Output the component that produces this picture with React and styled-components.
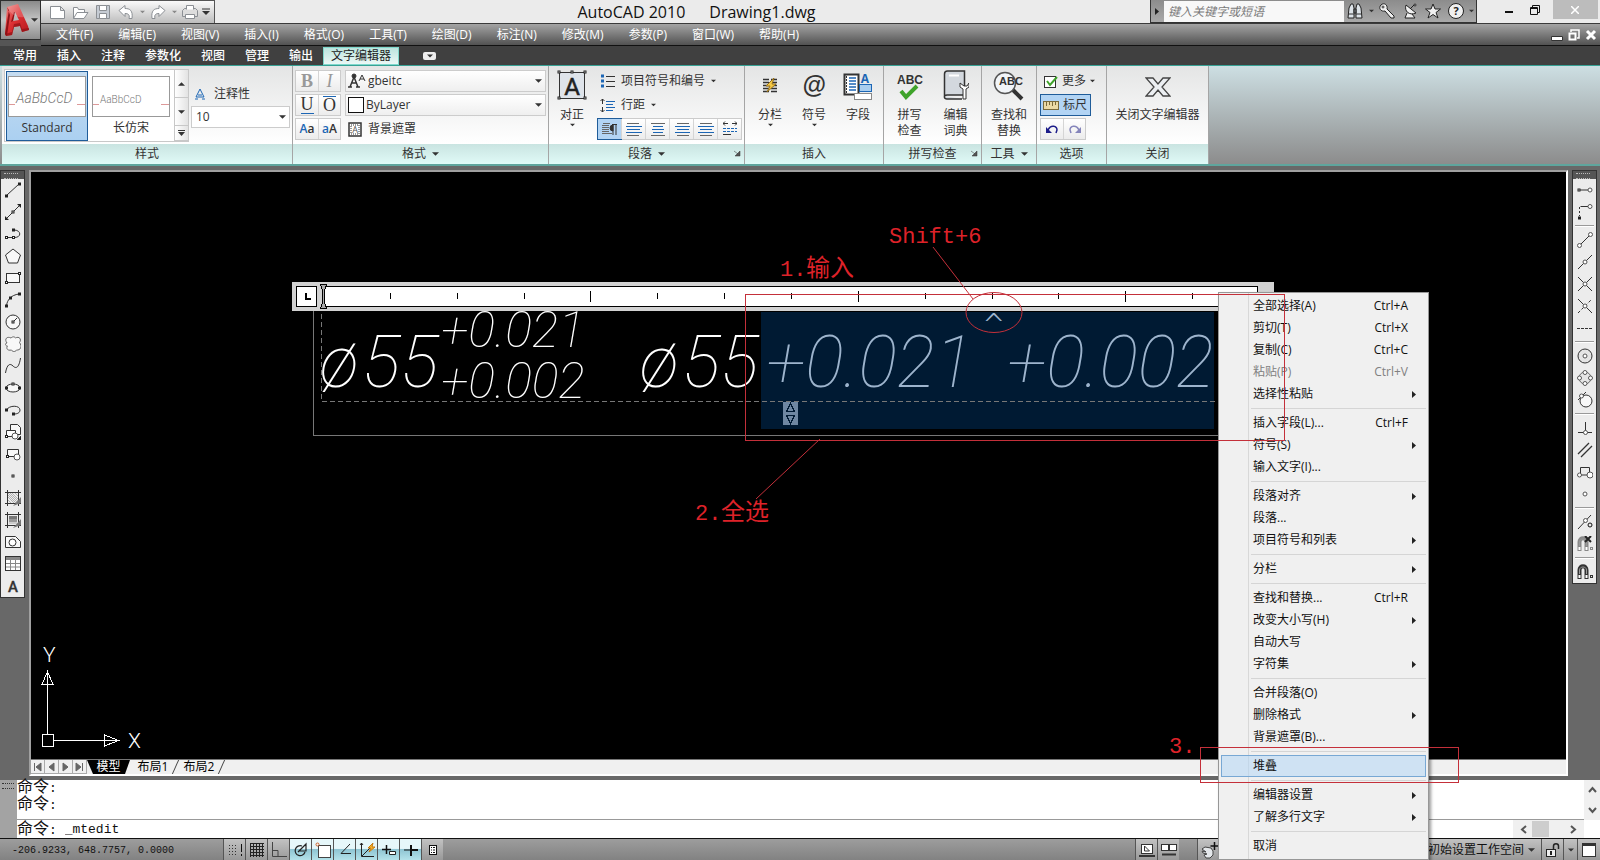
import React from "react";
import styled, { createGlobalStyle, css } from "styled-components";

const GlobalStyle = createGlobalStyle`
  * {
    box-sizing: border-box;
  }
  body {
    margin: 0;
    background-color: #686868;
  }
  button, select, input {
    font: inherit;
    color: inherit;
    margin: 0;
    padding: 0;
    border: none;
    background: none;
    border-radius: 0;
  }
  svg {
    display: block;
    flex-shrink: 0;
  }
`;

const mono = css`
  font-family: "Liberation Mono", "Noto Sans CJK SC", monospace;
`;

const grip = css`
  content: "";
  display: block;
  height: 4px;
  border-top: 1px dotted;
  border-bottom: 1px dotted;
`;

const Page = styled.div`
  position: relative;
  display: flex;
  flex-direction: column;
  min-height: 100vh;
  overflow: hidden;
  background-color: #686868;
  font-family: "Open Sans", "Noto Sans CJK SC", sans-serif;
  font-size: 12px;
  line-height: 16px;
  color: #333;
`;

/* ---------- header ---------- */

const Header = styled.header`
  display: grid;
  grid-template-columns: 41px 1fr;
  grid-template-rows: 24px 22px;
`;

const AppButton = styled.button`
  grid-row: 1 / 3;
  display: flex;
  align-items: center;
  gap: 1px;
  margin-bottom: 6px;
  padding-left: 4px;
  border: 1px solid #2e2e2e;
  background: linear-gradient(#8a8a8a, #c4c4c4 50%, #8e8e8e);
  box-shadow: 0 6px 0 #555;
`;

const TitleBar = styled.div`
  display: flex;
  justify-content: space-between;
  background-color: #ebebeb;
  border-bottom: 1px solid #3a3a3a;
`;

const QuickAccess = styled.div`
  display: flex;
  align-items: center;
  gap: 3px;
  width: 174px;
  padding-left: 6px;
  border: 1px solid #555;
  border-width: 1px 1px 0 0;
  background: linear-gradient(#fafafa, #bdbdbd);
`;

const QuickButton = styled.button`
  display: flex;
  align-items: center;
  justify-content: center;
  width: ${p => (p.$slim ? 6 : 20)}px;
  height: 20px;
`;

const WindowTitle = styled.h1`
  display: flex;
  gap: 24px;
  margin: 0;
  padding-left: 28px;
  font-size: 16px;
  line-height: 24px;
  font-weight: normal;
  color: #111;
`;

const TitleRight = styled.div`
  display: flex;
  align-items: flex-start;
`;

const InfoCenter = styled.div`
  display: flex;
  align-items: center;
  height: 23px;
  border: 1px solid #333;
  border-top: none;
  background: linear-gradient(#8c8c8c, #a9a9a9);
`;

const SearchInput = styled.input`
  width: 180px;
  height: 21px;
  padding-left: 4px;
  background-color: #f8f8f8;
  font-style: italic;
  outline: none;

  &::placeholder {
    color: #7a7a7a;
    opacity: 1;
  }
`;

const InfoButton = styled.button`
  display: flex;
  align-items: center;
  justify-content: center;
  width: ${p => p.$w || 23}px;
  height: 22px;
`;

const WindowButtons = styled.div`
  display: flex;
  gap: 10px;
  padding: 0 2px 0 24px;
`;

const WindowButton = styled.button`
  display: flex;
  align-items: center;
  justify-content: center;
  width: ${p => (p.$close ? 45 : 16)}px;
  height: 19px;
  background-color: ${p => (p.$close ? "#bcbcbc" : "transparent")};
`;

const MenuBar = styled.nav`
  display: flex;
  align-items: center;
  padding: 0 2px 0 3px;
  background: linear-gradient(#a4a4a4, #525252);
  border-bottom: 1px solid #111;
`;

const MenuButton = styled.button`
  padding: 0 13px 0 12px;
  line-height: 20px;
  color: #fff;
  text-align: left;
`;

const DocButtons = styled.div`
  display: flex;
  gap: 2px;
  margin-left: auto;
`;

const DocButton = styled.button`
  display: flex;
  align-items: center;
  justify-content: center;
  width: 15px;
  height: 16px;
`;

/* ---------- ribbon ---------- */

const RibbonTabs = styled.div`
  display: flex;
  align-items: flex-end;
  height: 19px;
  padding-left: 3px;
  background-color: #404040;
`;

const RibbonTab = styled.button`
  height: 18px;
  padding: 0 ${p => (p.$active ? 8 : 10)}px;
  line-height: 16px;
  color: ${p => (p.$active ? "#222" : "#fff")};
  font-weight: ${p => (p.$active ? 400 : 500)};
  background: ${p => (p.$active ? "linear-gradient(#b9e3dd, #eef9f7)" : "none")};
  box-shadow: ${p => (p.$active ? "inset 0 0 0 1px #7fd8cc" : "none")};
`;

const TabToggle = styled.button`
  align-self: center;
  display: flex;
  align-items: center;
  justify-content: center;
  width: 13px;
  height: 8px;
  margin-left: 24px;
  border-radius: 2px;
  background-color: #eee;
`;

const RibbonBar = styled.div`
  display: flex;
  padding-left: 2px;
  border-top: 1px solid #37a295;
  border-bottom: 2px solid #5fa59d;
  background: linear-gradient(#cddfe3, #8c8c8c);
`;

const Panel = styled.section`
  display: flex;
  flex-direction: column;
  flex: 0 0 ${p => p.$w}px;
  border-right: 1px solid #a5a5a5;
  background: linear-gradient(#e4e5e5, #fff 78px);
`;

const PanelBody = styled.div`
  display: flex;
  justify-content: ${p => (p.$center ? "center" : "flex-start")};
  height: 78px;
  padding: ${p => p.$pad || "4px"};
  gap: ${p => p.$gap || 0}px;
`;

const PanelTitle = styled.div`
  position: relative;
  display: flex;
  align-items: center;
  justify-content: center;
  gap: 6px;
  height: 20px;
  background: linear-gradient(#c9e4e1, #e0faf7);
`;

const Launcher = styled.button`
  position: absolute;
  right: 3px;
  top: 6px;
`;

const Column = styled.div`
  display: flex;
  flex-direction: column;
  align-items: flex-start;
  gap: ${p => p.$gap || 0}px;
  padding-top: ${p => p.$top || 0}px;
`;

const Gallery = styled.div`
  display: flex;
  gap: 2px;
  height: 73px;
  padding: 1px 0 0 1px;
  border: 1px solid #c8c8c8;
  background-color: #fff;
`;

const GalleryItem = styled.button`
  display: flex;
  flex-direction: column;
  align-items: center;
  width: 82px;
  height: 70px;
  padding-top: 4px;
  gap: 3px;
  border: 1px solid ${p => (p.$active ? "#1f5c99" : "transparent")};
  background: ${p => (p.$active ? "linear-gradient(#c6dcf0, #abd0f1)" : "none")};
`;

const GalleryScroll = styled.div`
  display: flex;
  flex-direction: column;
  width: 14px;
  margin-top: -1px;
  border-left: 1px solid #c8c8c8;
`;

const ScrollButton = styled.button`
  display: flex;
  align-items: center;
  justify-content: center;
  flex: ${p => p.$grow || 2};
  border-bottom: 1px solid #c8c8c8;
  background: linear-gradient(90deg, #fff, #e3e3e3);
`;

const ToolGroup = styled.div`
  display: flex;
  border: 1px solid #ccc;
  background: linear-gradient(#fff, #ececec);
`;

const ToolButton = styled.button`
  display: flex;
  align-items: center;
  justify-content: center;
  width: ${p => p.$w || 22}px;
  height: 20px;
  color: ${p => p.$color || "#333"};
  background-color: ${p => (p.$active ? "#b2d4f4" : "transparent")};
  box-shadow: ${p => (p.$active ? "0 0 0 1px #1f5c99" : "none")};

  & + & {
    border-left: 1px solid #d5d5d5;
  }
`;

const Glyph = styled.span`
  font-family: "Liberation Serif", serif;
  font-size: 18px;
  line-height: 17px;
  font-weight: ${p => (p.$bold ? 700 : 400)};
  font-style: ${p => (p.$italic ? "italic" : "normal")};
  border-bottom: ${p => (p.$under ? "1px solid #1c66b5" : "none")};
  border-top: ${p => (p.$over ? "1px solid #1c66b5" : "none")};
`;

const CaseGlyph = styled.span`
  font-weight: 600;

  & > i {
    font-style: normal;
    color: #1c66b5;
  }
`;

const Combo = styled.label`
  display: flex;
  align-items: center;
  width: ${p => p.$w}px;
  height: 22px;
  padding: 0 3px 0 2px;
  border: 1px solid #ccc;
  background: ${p => (p.$plain ? "#fff" : "linear-gradient(#fff, #efefef)")};
`;

const ComboSelect = styled.select`
  flex: 1;
  min-width: 0;
  padding-left: 2px;
  appearance: none;
  outline: none;
`;

const Swatch = styled.span`
  width: 16px;
  height: 16px;
  border: 1px solid #111;
  background-color: #fff;
`;

const FlatButton = styled.button`
  display: flex;
  align-items: center;
  gap: ${p => p.$gap || 6}px;
  height: 22px;
  padding: 0 3px 0 2px;
  border: 1px solid ${p => (p.$active ? "#1f5c99" : "transparent")};
  background-color: ${p => (p.$active ? "#b2d4f4" : "transparent")};
`;

const BigButton = styled.button`
  display: flex;
  flex-direction: column;
  align-items: center;
  width: ${p => p.$w || 46}px;
  height: 72px;
  line-height: 16px;
  white-space: pre-line;

  & > svg:first-child {
    margin-bottom: 6px;
  }
`;

/* ---------- workspace ---------- */

const Workspace = styled.main`
  display: flex;
  flex: 1;
  padding: 4px 3px 4px 0;
  justify-content: space-between;
  align-items: flex-start;
`;

const Toolbar = styled.div`
  display: flex;
  flex-direction: column;
  width: 25px;
  border: 1px solid #333;
  border-top: none;
  background-color: #ececec;
`;

const Grip = styled.div`
  height: 9px;
  padding: 2px 6px 2px 3px;
  background-color: #555;
  border-top: 1px solid #333;

  &::after {
    ${grip}
    color: #bbb;
  }
`;

const ToolbarButton = styled.button`
  display: flex;
  align-items: center;
  justify-content: center;
  height: 22px;
`;

const Separator = styled.hr`
  width: 19px;
  height: 2px;
  margin: 2px auto;
  border: none;
  border-top: 1px solid #999;
  background-color: #fff;
`;

const DrawingFrame = styled.div`
  align-self: stretch;
  display: flex;
  flex-direction: column;
  flex: 1;
  margin: 0 4px;
  border: 2px solid #a0a0a0;
  border-right-color: #fff;
  border-bottom-color: #fff;
  background-color: #f0f0f0;
`;

const Canvas = styled.div`
  flex: 1;
  min-height: 400px;
  overflow: hidden;
  background-color: #000;
`;

const LayoutTabs = styled.div`
  display: flex;
  height: 15px;
  border-top: 1px solid #777;
`;

const NavButton = styled.button`
  display: flex;
  align-items: center;
  justify-content: center;
  width: 14px;
  height: 14px;
  border-right: 1px solid #aaa;
  border-bottom: 1px solid #aaa;
`;

const LayoutTab = styled.button`
  position: relative;
  width: ${p => (p.$active ? 43 : 46)}px;
  height: 14px;
  line-height: 14px;
  color: ${p => (p.$active ? "#fff" : "#000")};
  background-color: ${p => (p.$active ? "#000" : "transparent")};
  clip-path: ${p => (p.$active ? "polygon(0 0, 100% 0, 38px 100%, 6px 100%)" : "none")};

  &::after {
    content: "";
    position: absolute;
    right: 0;
    top: 0;
    width: 1px;
    height: 14px;
    background-color: #444;
    transform: skewX(-24deg);
  }
`;

/* ---------- command line and status bar ---------- */

const CommandWindow = styled.div`
  display: grid;
  grid-template-columns: 17px 1fr 16px;
  background-color: #fff;
  border-bottom: 1px solid #111;
`;

const CommandGrip = styled.div`
  grid-row: 1 / 3;
  padding: 3px 3px 3px 2px;
  background-color: #a3a3a3;

  &::after {
    ${grip}
    color: #333;
  }
`;

const History = styled.div`
  ${mono}
  height: 40px;
  font-size: 13px;
  line-height: 16px;
  color: #111;
  white-space: pre;
  border-bottom: 1px solid #999;
`;

const Prompt = styled.div`
  ${mono}
  display: flex;
  justify-content: space-between;
  height: 18px;
  grid-column: 2 / 4;
  font-size: 13px;
  line-height: 20px;
  color: #111;
`;

const Cjk = styled.span`
  font-size: 16px;
`;

const CommandInput = styled.input`
  flex: 1;
  height: 20px;
  outline: none;
`;

const ScrollBar = styled.div`
  display: flex;
  flex-direction: ${p => (p.$vertical ? "column" : "row")};
  align-items: center;
  justify-content: space-between;
  padding: ${p => (p.$vertical ? "5px 0" : "1px 6px")};
  background-color: #f0f0f0;
`;

const Thumb = styled.span`
  width: 17px;
  height: 16px;
  margin: 0 20px 0 4px;
  background-color: #cdcdcd;
`;

const StatusBar = styled.footer`
  display: flex;
  height: 21px;
  background: linear-gradient(#9d9d9d, #828282);
`;

const Coordinates = styled.div`
  ${mono}
  width: 223px;
  padding-left: 12px;
  font-size: 10px;
  line-height: 24px;
  color: #111;
`;

const StatusButton = styled.button`
  display: flex;
  align-items: center;
  justify-content: center;
  width: ${p => p.$w || 22}px;
  border-left: 1px solid #555;
  background: ${p =>
    p.$active ? "linear-gradient(#e6f7fa 45%, #8fc5d3 50%, #b4e2ea)" : "linear-gradient(#c2c2c2, #999)"};
`;

const StatusRight = styled.div`
  display: flex;
  margin-left: auto;
`;

const StatusGap = styled.div`
  width: ${p => p.$w}px;
`;

const WorkspaceSelect = styled.label`
  display: flex;
  align-items: center;
  width: 117px;
  padding: 0 6px 0 2px;
  color: #111;
  background: linear-gradient(#c2c2c2, #999);
`;

/* ---------- context menu ---------- */

const ContextMenu = styled.div`
  position: absolute;
  left: 1218px;
  bottom: 0;
  width: 211px;
  padding: 2px;
  border: 1px solid #979797;
  background: linear-gradient(90deg, transparent 29px, #d8d8d8 29px, #d8d8d8 30px, transparent 30px), #f0f0f0;
  box-shadow: 2px 2px 3px rgba(0, 0, 0, 0.4);
  color: #111;
`;

const MenuItem = styled.button`
  display: flex;
  align-items: center;
  width: 100%;
  height: 22px;
  padding: 0 9px 0 31px;
  color: ${p => (p.disabled ? "#808080" : "#111")};
  background-color: ${p => (p.$hot ? "rgba(180, 215, 245, 0.55)" : "transparent")};
  border: 1px solid ${p => (p.$hot ? "#78a8d4" : "transparent")};
`;

const Shortcut = styled.span`
  margin-left: auto;
  margin-right: 8px;
`;

const ItemArrow = styled.span`
  margin-left: auto;
`;

const MenuRule = styled.hr`
  height: 1px;
  margin: 3px 0 3px 30px;
  border: none;
  background-color: #d5d5d5;
`;

const Notes = styled.svg`
  position: absolute;
  inset: 0;
  pointer-events: none;
`;

/* ---------- icons ---------- */

const Svg = ({ w = 16, h = 16, children }) => (
  <svg width={w} height={h} viewBox={`0 0 ${w} ${h}`} fill="none" stroke="#333" strokeWidth="1">
    {children}
  </svg>
);

const Down = ({ w = 7, color = "#333" }) => (
  <svg width={w} height="4" viewBox="0 0 8 4">
    <path d="M0 0h8L4 4z" fill={color} />
  </svg>
);

const Right = () => (
  <svg width="4" height="7" viewBox="0 0 4 7">
    <path d="M0 0v7l4-3.5z" fill="#222" />
  </svg>
);

const Node = ({ x, y }) => (
  <rect x={x - 1} y={y - 1} width="2" height="2" fill="#fff" stroke="#222" />
);

const Dot = ({ x, y, r = 2 }) => <circle cx={x} cy={y} r={r} fill="#fff" stroke="#555" />;

const Launch = () => (
  <Svg w={7} h={7}>
    <path d="M0 1l4 3M6 1v5H1z" fill="#555" strokeWidth=".5" />
  </Svg>
);

const Logo = () => (
  <svg width="25" height="34" viewBox="0 0 25 34">
    <defs>
      <linearGradient id="logoRed" x1="0" y1="0" x2="1" y2="1">
        <stop offset="0" stopColor="#f08a86" />
        <stop offset="0.45" stopColor="#dd3033" />
        <stop offset="1" stopColor="#b3171c" />
      </linearGradient>
    </defs>
    <path d="M2 4L13 1l10 22 1 4-7 2-2-6-6 1-2 8-6 1-1-2z" fill="url(#logoRed)" />
    <path d="M2 4l2 3L0 31l2 2L5 12z" fill="#8f1116" />
    <path d="M0 31l7-2 2-8 6-1 2 6 7-1v2l-7 2-2-6-6 1-2 8-6 1z" fill="#8f1116" opacity="0.7" />
    <path d="M10 9l4 8-6 1z" fill="#b9b9b9" />
    <path d="M10 9l-2 9-2 1 3-10z" fill="#8f1116" />
    <path d="M2 4L13 1l6 13C12 15 6 12 2 4z" fill="#fff" opacity="0.2" />
  </svg>
);

const quickIcons = {
  new: <path d="M1.500 2.500h10l4 4v8h-14zM11.500 2.500v4h4" fill="#fff" />,
  open: <path d="M1.500 14.500v-11h4l1 2h6v3M1.500 14.500l3.500-6h11l-4 6z" fill="#fff" />,
  save: (
    <>
      <path d="M1.500 1.500h13v13h-13z" fill="#c5cbd3" />
      <path d="M4.500 1.500h7v5h-7zM4.500 9.500h7v5h-7z" fill="#fff" />
    </>
  ),
  undo: <path d="M1 6.500l6-5v3c5 0 8 2 7 10h-3c1-4-1-5-4-5v3z" fill="#fff" />,
  redo: <path d="M15 6.500l-6-5v3c-5 0-8 2-7 10h3c-1-4 1-5 4-5v3z" fill="#fff" />,
  print: (
    <>
      <path d="M.500 6.500l2-2h11l2 2v6h-15z" fill="#ddd" />
      <path d="M4.500 5.500v-4h7v4M3.500 10.500h9v4h-9z" fill="#fff" />
    </>
  )
};

const QuickIcon = ({ name }) => (
  <svg width="17" height="16" viewBox="0 0 17 16" fill="none" stroke="#8b8f94">
    {quickIcons[name]}
  </svg>
);

const drawTools = [
  ["直线", <><path d="M2 13L14 2" /><Node x={1.5} y={14} /><Node x={14.500} y={2} /></>],
  ["构造线", <><path d="M1 15L15 1" /><path d="M0 12v4h4zM16 4V0h-4z" fill="#222" stroke="none" /><Node x={8} y={8} /></>],
  ["多段线", <><path d="M1.500 11.500h8c7 0 7-7 0-7.500" /><Node x={1.500} y={11.500} /><Node x={8.500} y={11.500} /><Node x={8.500} y={4} /></>],
  ["正多边形", <path d="M8 1l7.500 6-3 8h-9l-3-8z" fill="#f8f8f8" />],
  ["矩形", <><rect x="1.500" y="3.500" width="13" height="9" fill="#f8f8f8" /><Node x={1.500} y={12.500} /><Node x={14.500} y={3.500} /></>],
  ["圆弧", <><path d="M1.500 14C2 8 6 3 14 2" /><Node x={1.500} y={14} /><Node x={5.500} y={6} /><Node x={14.500} y={2} /></>],
  ["圆", <><circle cx="8" cy="8" r="7" fill="#f8f8f8" /><path d="M8 8l4-4" /><Node x={8} y={8} /></>],
  ["修订云线", <path d="M2 7C-1 3 2 0 6 2c2-2 4-1 4.500 0C14 0 17 3 14.500 6.500c3 4 1 8-3 7.500-1 2-4 2-5 0C2 15 1 12 2.500 10 0 10 0 7 2 7z" fill="#f8f8f8" stroke="#666" />],
  ["样条曲线", <path d="M.500 15C2 6 5 5 8 8s6 2 7.500-8" />],
  ["椭圆", <><ellipse cx="8" cy="8" rx="7" ry="4" fill="#f8f8f8" /><Node x={1.500} y={8} /><Node x={14.500} y={8} /><Node x={8} y={4} /></>],
  ["椭圆弧", <><path d="M1.500 8C4 3 15 3 15 8c0 3-3 4-6 4" /><Node x={1.500} y={8} /><Node x={8.500} y={12} /></>],
  ["插入块", <><path d="M5.500 6V.500h7l3 3v7h-4" fill="#f8f8f8" /><path d="M1.500 6.500h9v6h-9z" fill="#fff" /><Dot x={10} y={12} r={3} /><path d="M16 12v4h-4z" fill="#111" /><Node x={1.500} y={12.500} /></>],
  ["创建块", <><path d="M2.500 3.500h11v7h-11z" fill="#f8f8f8" /><Dot x={12} y={11} r={3} /><Node x={2.500} y={10.500} /></>],
  ["点", <Node x={8} y={8} />],
  ["图案填充", <><path d="M0 2.500h16M0 13.500h16M2.500 0v16M13.500 0v16" /><path d="M3 3l10 10M3 7l6 6M7 3l6 6M3 10l3 3M10 3l3 3M3 5l8 8M5 3l8 8" stroke="#999" strokeWidth=".7" /><path d="M16 7v6l-8 3z" fill="#777" stroke="none" /></>],
  ["渐变色", <><path d="M0 2.500h16M0 13.500h16M2.500 0v16M13.500 0v16" /><path d="M4 4h8v3H4z" fill="#777" stroke="none" /><path d="M4 7h8v3H4z" fill="#999" stroke="none" /><path d="M4 10h8v2H4z" fill="#ccc" stroke="none" /><path d="M16 7v6l-8 3z" fill="#777" stroke="none" /></>],
  ["面域", <><path d="M.500 2.500h10l5 5v6h-15z" fill="#f8f8f8" /><circle cx="7.500" cy="8.500" r="3.500" fill="#fff" /></>],
  ["表格", <><rect x=".500" y=".500" width="15" height="14" fill="#fff" /><path d="M1 1h14v3H1z" fill="#888" stroke="none" /><path d="M1 7.500h14M1 11h14M5.500 4v10M10.500 4v10" stroke="#888" /></>],
  ["多行文字", <text x="8" y="14" fontSize="15" fontWeight="500" textAnchor="middle" fontFamily="Roboto, sans-serif" fill="#333" stroke="#333" strokeWidth=".3">A</text>]
];

const Magnet = ({ color }) => (
  <>
    <path d="M2.500 15V6c0-5 7-5 7 0v9" stroke={color} strokeWidth="4" />
    <path d="M2.500 14v-3M9.500 14v-3" stroke="#fff" strokeWidth="2" />
    <path d="M2.500 10V6c0-4 7-4 7 0v4" stroke="#999" />
    <rect x="13.500" y="11.500" width="2" height="2" stroke={color} />
  </>
);

const snapTools = [
  ["临时追踪点", <><path d="M2 8h9" /><Node x={2} y={8} /><Dot x={13} y={8} /></>],
  ["捕捉自", <><path d="M3.500 2.500H11" /><path d="M2.500 3v9" strokeDasharray="2 2" /><Node x={2.500} y={14} /><Dot x={13} y={2.500} /></>],
  null,
  ["端点", <><path d="M3 13L13 3" /><Dot x={2.500} y={13.500} /><Dot x={13.500} y={2.500} /></>],
  ["中点", <><path d="M1 15L15 1" /><Dot x={8} y={8} /></>],
  ["交点", <><path d="M1 1l14 14M1 15L15 1" /><Dot x={8} y={8} /></>],
  ["外观交点", <><path d="M1 1l14 14" /><path d="M1 15L15 1" strokeDasharray="3 2" /><Dot x={8} y={8} /></>],
  ["延长线", <path d="M0 8.500h7M8 8.500h8" strokeDasharray="3 1" />],
  null,
  ["圆心", <><circle cx="8" cy="8" r="7" fill="#e4e4e4" /><Dot x={8} y={8} /></>],
  ["象限点", <><circle cx="8" cy="8" r="6" fill="#e4e4e4" stroke="#666" /><Dot x={8} y={2.500} /><Dot x={8} y={13.500} /><Dot x={2.500} y={8} /><Dot x={13.500} y={8} /></>],
  ["切点", <><circle cx="9" cy="9" r="6" fill="#f8f8f8" /><path d="M1 8l8-8" /><Dot x={4.500} y={4} /></>],
  null,
  ["垂足", <><path d="M1 12.500h14M8.500 2v9" /><Dot x={8.500} y={12.500} /></>],
  ["平行线", <path d="M1 12L12 1M4 15L15 4" strokeWidth="1.300" />],
  ["插入点", <><path d="M3.500 10V3.500h9V10M4 11h8" /><Dot x={2.500} y={11} /><Dot x={13} y={11} r={3} /></>],
  ["节点", <Dot x={8} y={8} />],
  null,
  ["最近点", <><path d="M1 15L14 1" /><Dot x={8.500} y={6.500} /><circle cx="13" cy="11" r="2" stroke="#111" /></>],
  ["无捕捉", <><Magnet color="#888" /><path d="M8 0l6 6M14 0L8 6" stroke="#222" strokeWidth="2" /></>],
  null,
  ["对象捕捉设置", <Magnet color="#333" />]
];

const AlignIcon = ({ rows }) => (
  <Svg>
    {rows.map(([x, w], i) => (
      <path key={i} d={`M${x} ${i * 3 + 2}.500h${w}`} stroke={i === 0 || i === 4 ? "#666" : "#1c66b5"} />
    ))}
  </Svg>
);

const alignments = [
  ["左对齐", [[1, 12], [0, 16], [1, 13], [0, 16], [1, 12]]],
  ["居中", [[1, 14], [3, 10], [2, 12], [3, 10], [1, 14]]],
  ["右对齐", [[3, 12], [1, 15], [3, 12], [1, 15], [3, 12]]],
  ["对正", [[2, 12], [0, 16], [2, 12], [0, 16], [2, 12]]]
];

/* ---------- data ---------- */

const menus = [
  "文件(F)", "编辑(E)", "视图(V)", "插入(I)", "格式(O)", "工具(T)",
  "绘图(D)", "标注(N)", "修改(M)", "参数(P)", "窗口(W)", "帮助(H)"
];

const ribbonTabs = ["常用", "插入", "注释", "参数化", "视图", "管理", "输出", "文字编辑器"];

const contextItems = [
  { label: "全部选择(A)", keys: "Ctrl+A" },
  { label: "剪切(T)", keys: "Ctrl+X" },
  { label: "复制(C)", keys: "Ctrl+C" },
  { label: "粘贴(P)", keys: "Ctrl+V", disabled: true },
  { label: "选择性粘贴", sub: true },
  null,
  { label: "插入字段(L)...", keys: "Ctrl+F" },
  { label: "符号(S)", sub: true },
  { label: "输入文字(I)..." },
  null,
  { label: "段落对齐", sub: true },
  { label: "段落..." },
  { label: "项目符号和列表", sub: true },
  null,
  { label: "分栏", sub: true },
  null,
  { label: "查找和替换...", keys: "Ctrl+R" },
  { label: "改变大小写(H)", sub: true },
  { label: "自动大写" },
  { label: "字符集", sub: true },
  null,
  { label: "合并段落(O)" },
  { label: "删除格式", sub: true },
  { label: "背景遮罩(B)..." },
  null,
  { label: "堆叠", hot: true },
  null,
  { label: "编辑器设置", sub: true },
  { label: "了解多行文字", sub: true },
  null,
  { label: "取消" }
];

/* ---------- sections ---------- */

const Top = () => (
  <Header>
    <AppButton aria-label="应用程序菜单">
      <Logo />
      <Down />
    </AppButton>
    <TitleBar>
      <QuickAccess>
        <QuickButton aria-label="新建"><QuickIcon name="new" /></QuickButton>
        <QuickButton aria-label="打开"><QuickIcon name="open" /></QuickButton>
        <QuickButton aria-label="保存"><QuickIcon name="save" /></QuickButton>
        <QuickButton aria-label="放弃"><QuickIcon name="undo" /></QuickButton>
        <QuickButton $slim aria-label="放弃列表"><Down w={5} color="#888" /></QuickButton>
        <QuickButton aria-label="重做"><QuickIcon name="redo" /></QuickButton>
        <QuickButton $slim aria-label="重做列表"><Down w={5} color="#888" /></QuickButton>
        <QuickButton aria-label="打印"><QuickIcon name="print" /></QuickButton>
        <QuickButton $slim aria-label="自定义">
          <Svg w={8} h={8}><path d="M0 1h8" /><path d="M0 3h8L4 7z" fill="#333" stroke="none" /></Svg>
        </QuickButton>
      </QuickAccess>
      <WindowTitle><span>AutoCAD 2010</span><span>Drawing1.dwg</span></WindowTitle>
      <TitleRight>
        <InfoCenter>
          <InfoButton $w={13} aria-label="收拢"><Right /></InfoButton>
          <SearchInput placeholder="键入关键字或短语" aria-label="搜索" />
          <InfoButton aria-label="查找">
            <Svg>
              <path d="M1 15l1-10 2-4h2l1 4v10zM9 15V5l1-4h2l2 4 1 10zM7 6h2v4H7z" fill="#dde3e8" stroke="#222" />
              <path d="M1 11h6M9 11h6" />
            </Svg>
          </InfoButton>
          <InfoButton $w={9} aria-label="查找选项"><Down w={5} /></InfoButton>
          <InfoButton aria-label="速博应用中心">
            <Svg><path d="M2 2c3-3 7 0 6 4l7 7v2h-3L6 8C2 9-1 5 2 2z" fill="#f0f0f0" stroke="#222" /><circle cx="4" cy="4" r="1" /></Svg>
          </InfoButton>
          <InfoButton aria-label="通讯中心">
            <Svg><path d="M4 2c-2 6 3 11 10 8zM5 10l-2 5h10l-3-4M8 6l5-5" fill="#f0f0f0" stroke="#222" /><circle cx="13" cy="2" r="1" fill="#fff" stroke="#222" /></Svg>
          </InfoButton>
          <InfoButton aria-label="收藏夹">
            <Svg><path d="M8 1l2 5h5.500l-4.500 3.500 2 5.500-5-3.500L3 15l2-5.500L.500 6H6z" fill="#f0f0f0" stroke="#222" /></Svg>
          </InfoButton>
          <InfoButton aria-label="帮助">
            <Svg>
              <circle cx="8" cy="8" r="7.500" fill="#f0f0f0" stroke="#222" />
              <text x="8" y="12" fontSize="11" fontWeight="700" textAnchor="middle" fill="#222" stroke="none">?</text>
            </Svg>
          </InfoButton>
          <InfoButton $w={8} aria-label="帮助选项"><Down w={5} /></InfoButton>
        </InfoCenter>
        <WindowButtons>
          <WindowButton aria-label="最小化"><Svg w={10} h={8}><path d="M1 6h8" stroke="#111" strokeWidth="2" /></Svg></WindowButton>
          <WindowButton aria-label="还原"><Svg w={10} h={10}><path d="M2.500 2V.500h7v7H8M.500 2.500h7v7h-7zM.500 3.500h7" stroke="#111" /></Svg></WindowButton>
          <WindowButton $close aria-label="关闭"><Svg w={8} h={8}><path d="M0 0l8 8M8 0L0 8" stroke="#fff" strokeWidth="1.500" /></Svg></WindowButton>
        </WindowButtons>
      </TitleRight>
    </TitleBar>
    <MenuBar>
      {menus.map(m => <MenuButton key={m}>{m}</MenuButton>)}
      <DocButtons>
        <DocButton aria-label="最小化图形"><Svg w={12} h={12}><path d="M.500 7.500h11v4H.500z" fill="#fff" /></Svg></DocButton>
        <DocButton aria-label="还原图形"><Svg w={12} h={12}><path d="M3 3V1h8v8H9" stroke="#fff" strokeWidth="1.500" /><path d="M1.500 4.500h6v6h-6z" stroke="#fff" strokeWidth="2" /></Svg></DocButton>
        <DocButton aria-label="关闭图形"><Svg w={12} h={12}><path d="M2 2l8 8M10 2l-8 8" stroke="#fff" strokeWidth="3" /></Svg></DocButton>
      </DocButtons>
    </MenuBar>
  </Header>
);

const StylePreview = ({ narrow }) => (
  <svg width="78" height="41" viewBox="0 0 78 41">
    <rect x=".5" y=".5" width="77" height="40" fill="#fff" stroke="#999" />
    <path d="M1 28.500h6M69 28.500h8" stroke="#d99" />
    <text
      x="8"
      y="27"
      fontFamily="Roboto, sans-serif"
      fontWeight="300"
      fontStyle={narrow ? "normal" : "italic"}
      fontSize={narrow ? 10 : 14}
      fill="#777"
    >
      AaBbCcD
    </text>
  </svg>
);

const StylePanel = () => (
  <Panel $w={291}>
    <PanelBody $pad="3px 2px" $gap={2}>
      <Gallery>
        <GalleryItem $active><StylePreview />Standard</GalleryItem>
        <GalleryItem><StylePreview narrow />长仿宋</GalleryItem>
        <GalleryScroll>
          <ScrollButton aria-label="上一行"><svg width="7" height="4" viewBox="0 0 8 4"><path d="M0 4h8L4 0z" fill="#333" /></svg></ScrollButton>
          <ScrollButton aria-label="下一行"><Down /></ScrollButton>
          <ScrollButton $grow={1} aria-label="更多样式"><Svg w={7} h={6}><path d="M0 .500h7" /><path d="M0 2h7L3.500 6z" fill="#333" stroke="none" /></Svg></ScrollButton>
        </GalleryScroll>
      </Gallery>
      <Column $gap={1} $top={14}>
        <FlatButton $gap={8}>
          <Svg w={12} h={12}><path d="M2 9l4-8 4 8zM1 11h3M8 11h3M4 7h4" stroke="#1c66b5" /></Svg>
          注释性
        </FlatButton>
        <Combo $w={99} $plain>
          <ComboSelect aria-label="文字高度"><option>10</option></ComboSelect>
          <Down />
        </Combo>
      </Column>
    </PanelBody>
    <PanelTitle>样式</PanelTitle>
  </Panel>
);

const FormatPanel = () => (
  <Panel $w={256}>
    <PanelBody $gap={4} $pad="4px 2px">
      <Column $gap={2}>
        <ToolGroup>
          <ToolButton $color="#999" aria-label="粗体"><Glyph $bold>B</Glyph></ToolButton>
          <ToolButton $color="#999" aria-label="斜体"><Glyph $italic>I</Glyph></ToolButton>
        </ToolGroup>
        <ToolGroup>
          <ToolButton aria-label="下划线"><Glyph $under>U</Glyph></ToolButton>
          <ToolButton aria-label="上划线"><Glyph $over>O</Glyph></ToolButton>
        </ToolGroup>
        <ToolGroup>
          <ToolButton aria-label="大写"><CaseGlyph><i>A</i>a</CaseGlyph></ToolButton>
          <ToolButton aria-label="小写"><CaseGlyph><i>a</i>A</CaseGlyph></ToolButton>
        </ToolGroup>
      </Column>
      <Column $gap={2}>
        <Combo $w={201}>
          <Svg w={18}>
            <path d="M2 14l4-10 4 10M3 10h6M0 14h4M8 14h4" strokeWidth="1.500" />
            <path d="M11 8l3-6 3 6M12 6h4" />
            <circle cx="6" cy="3" r="2" fill="#333" />
          </Svg>
          <ComboSelect aria-label="字体"><option>gbeitc</option></ComboSelect>
          <Down />
        </Combo>
        <Combo $w={201}>
          <Swatch />
          <ComboSelect aria-label="颜色"><option>ByLayer</option></ComboSelect>
          <Down />
        </Combo>
        <FlatButton>
          <Svg w={14} h={15}>
            <rect x="1" y="1" width="12" height="13" fill="#fff" strokeWidth="1.500" />
            <rect x="3" y="3" width="8" height="9" strokeDasharray="1 1" />
            <text x="7" y="11" fontSize="9" textAnchor="middle" fill="#555" stroke="none">A</text>
          </Svg>
          背景遮罩
        </FlatButton>
      </Column>
    </PanelBody>
    <PanelTitle>格式 <Down /></PanelTitle>
  </Panel>
);

const ParagraphPanel = () => (
  <Panel $w={196}>
    <PanelBody $pad="4px 1px 4px 0" $gap={2}>
      <BigButton $w={46}>
        <Svg w={30} h={31}>
          <rect x="2.500" y="2.500" width="25" height="26" fill="#dfe4ea" />
          <text x="15" y="25" fontSize="24" textAnchor="middle" fontFamily="Roboto, sans-serif" fill="#222" stroke="#222" strokeWidth=".5">A</text>
          {[2, 15, 28].map(x => <Node key={x} x={x} y={2} />)}
          <Node x={2} y={28} />
          <Node x={28} y={28} />
        </Svg>
        对正
        <Down w={5} />
      </BigButton>
      <Column $gap={2}>
        <FlatButton>
          <Svg w={15} h={14}>
            <path d="M1 2h3M1 7h3M1 12h3" stroke="#1c66b5" strokeWidth="3" />
            <path d="M6 2.500h9M6 7.500h9M6 12.500h9" />
          </Svg>
          项目符号和编号 <Down w={5} />
        </FlatButton>
        <FlatButton>
          <Svg w={15} h={15}>
            <path d="M2.500 1v5M2.500 9v5M.500 3l2-2 2 2M.500 12l2 2 2-2" />
            <path d="M6 3.500h9M6 6.500h7M6 9.500h9M6 12.500h7" stroke="#1c66b5" />
          </Svg>
          行距 <Down w={5} />
        </FlatButton>
        <ToolGroup>
          <ToolButton $active $w={23} aria-label="默认">
            <Svg>
              <path d="M1 2.500h7M0 4.500h7M0 6.500h7M0 8.500h7M0 10.500h7M0 12.500h10" stroke="#666" />
              <path d="M11 14V4M14 14V4M15 3.500h-5" />
              <path d="M11 4a3 3 0 000 6z" fill="#333" />
            </Svg>
          </ToolButton>
          {alignments.map(([label, rows]) => (
            <ToolButton key={label} $w={24} aria-label={label}><AlignIcon rows={rows} /></ToolButton>
          ))}
          <ToolButton $w={24} aria-label="分散对齐">
            <Svg w={14} h={16}>
              <path d="M0 2.500h5M9 2.500h5M2 .500l-2 2 2 2M12 .500l2 2-2 2" />
              <path d="M0 7.500h14M0 10.500h14" stroke="#1c66b5" strokeDasharray="3 1" />
              <path d="M0 13.500h8" />
            </Svg>
          </ToolButton>
        </ToolGroup>
      </Column>
    </PanelBody>
    <PanelTitle>段落 <Down /><Launcher aria-label="段落设置"><Launch /></Launcher></PanelTitle>
  </Panel>
);

const InsertPanel = () => (
  <Panel $w={139}>
    <PanelBody $center $pad="4px 0">
      <BigButton>
        <Svg w={16} h={31}>
          <path d="M1 9.500h6M9 9.500h6M1 12.500h6M9 12.500h6M1 15.500h6M9 15.500h6M1 18.500h6M9 18.500h6M1 21.500h6M9 21.500h6" strokeWidth="1.500" />
          <path d="M12 8l-8 8h4l-3 6 9-8h-4z" fill="#f6c945" stroke="#96701a" />
        </Svg>
        分栏
        <Down w={5} />
      </BigButton>
      <BigButton $w={42}>
        <Svg w={26} h={31}>
          <text x="13" y="23" fontSize="24" fontWeight="700" fontStyle="italic" textAnchor="middle" fontFamily="Liberation Sans, sans-serif" fill="#333" stroke="none">@</text>
        </Svg>
        符号
        <Down w={5} />
      </BigButton>
      <BigButton>
        <Svg w={30} h={31}>
          <rect x="1.500" y="4.500" width="14" height="20" fill="#fff" strokeWidth="2" />
          <path d="M6 8h7M6 11h7M6 14h7M6 17h7M6 20h7" stroke="#1c66b5" strokeWidth="1.500" />
          <path d="M3.500 6v18" strokeDasharray="2 1" />
          <text x="22" y="13" fontSize="12" fontWeight="700" textAnchor="middle" fill="#1c66b5" stroke="none">A</text>
          <rect x="16.500" y="14.500" width="12" height="7" fill="#a9cdee" stroke="#1c66b5" />
          <rect x="11.500" y="23.500" width="17" height="6" fill="#fff" stroke="#888" />
        </Svg>
        字段
      </BigButton>
    </PanelBody>
    <PanelTitle>插入</PanelTitle>
  </Panel>
);

const SpellPanel = () => (
  <Panel $w={98}>
    <PanelBody $center $pad="4px 0">
      <BigButton>
        <Svg w={30} h={31}>
          <text x="15" y="14" fontSize="12" fontWeight="700" textAnchor="middle" fontFamily="Liberation Sans, sans-serif" fill="#333" stroke="none">ABC</text>
          <path d="M6 21l5 6L22 16" stroke="#3fa32a" strokeWidth="4" />
        </Svg>
        {"拼写\n检查"}
      </BigButton>
      <BigButton>
        <Svg w={26} h={31}>
          <path d="M1.500 26V4c0-2 1-3 3-3h17v24H4c-4 0-3 4 0 4h15" fill="#d3d8de" strokeWidth="1.500" />
          <path d="M6 5.500h10" stroke="#fff" strokeWidth="2" />
          <path d="M17 13v4l3 2v10h3V19l3-2v-4l-2 3h-3z" fill="#fff" />
        </Svg>
        {"编辑\n词典"}
      </BigButton>
    </PanelBody>
    <PanelTitle>拼写检查<Launcher aria-label="拼写检查设置"><Launch /></Launcher></PanelTitle>
  </Panel>
);

const ToolsPanel = () => (
  <Panel $w={55}>
    <PanelBody $center $pad="4px 0">
      <BigButton $w={54}>
        <Svg w={32} h={31}>
          <path d="M20 20l9 9" strokeWidth="4" />
          <circle cx="12" cy="13" r="10.500" fill="#f2f5f8" stroke="#555" strokeWidth="1.500" />
          <text x="18" y="15" fontSize="11" fontWeight="700" textAnchor="middle" fontFamily="Liberation Sans, sans-serif" fill="#333" stroke="none">ABC</text>
        </Svg>
        {"查找和\n替换"}
      </BigButton>
    </PanelBody>
    <PanelTitle>工具 <Down /></PanelTitle>
  </Panel>
);

const OptionsPanel = () => (
  <Panel $w={70}>
    <PanelBody $pad="4px 3px">
      <Column $gap={2}>
        <FlatButton $gap={4}>
          <Svg w={15} h={14}>
            <rect x="1.500" y="2.500" width="11" height="11" fill="#fff" />
            <path d="M4 7l3 4 7-8" stroke="#3fa32a" strokeWidth="2" />
          </Svg>
          更多 <Down w={5} />
        </FlatButton>
        <FlatButton $active $gap={4}>
          <Svg w={16} h={9}>
            <rect x=".500" y=".500" width="15" height="8" fill="#ead9a4" stroke="#7a6a3a" />
            <path d="M3.500 1v4M6.500 1v3M9.500 1v4M12.500 1v3" stroke="#7a6a3a" />
          </Svg>
          标尺
        </FlatButton>
        <ToolGroup>
          <ToolButton aria-label="放弃"><Svg w={12} h={9}><path d="M2 5c3-6 9-4 9 0l-1 3" stroke="#1d1d8a" strokeWidth="1.500" /><path d="M0 2v6h6z" fill="#1d1d8a" stroke="none" /></Svg></ToolButton>
          <ToolButton aria-label="重做"><Svg w={12} h={9}><path d="M10 5C7-1 1 1 1 5l1 3" stroke="#8585bb" strokeWidth="1.500" /><path d="M12 2v6H6z" fill="#8585bb" stroke="none" /></Svg></ToolButton>
        </ToolGroup>
      </Column>
    </PanelBody>
    <PanelTitle>选项</PanelTitle>
  </Panel>
);

const ClosePanel = () => (
  <Panel $w={102}>
    <PanelBody $center $pad="4px 0">
      <BigButton $w={100}>
        <Svg w={26} h={31}>
          <path d="M1 8h7l5 6 5-6h7l-8 9 8 9h-7l-5-6-5 6H1l8-9z" fill="#eceff2" stroke="#444" strokeWidth="1.300" />
        </Svg>
        关闭文字编辑器
      </BigButton>
    </PanelBody>
    <PanelTitle>关闭</PanelTitle>
  </Panel>
);

const Ribbon = () => (
  <>
    <RibbonTabs>
      {ribbonTabs.map((t, i) => <RibbonTab key={t} $active={i === 7}>{t}</RibbonTab>)}
      <TabToggle aria-label="最小化功能区"><Down w={6} /></TabToggle>
    </RibbonTabs>
    <RibbonBar>
      <StylePanel />
      <FormatPanel />
      <ParagraphPanel />
      <InsertPanel />
      <SpellPanel />
      <ToolsPanel />
      <OptionsPanel />
      <ClosePanel />
    </RibbonBar>
  </>
);

const ToolStrip = ({ tools }) => (
  <Toolbar>
    <Grip />
    {tools.map((tool, i) =>
      tool ? (
        <ToolbarButton key={i} aria-label={tool[0]}><Svg>{tool[1]}</Svg></ToolbarButton>
      ) : (
        <Separator key={i} />
      )
    )}
  </Toolbar>
);

const ticks = Array.from({ length: 13 }, (_, i) => ({
  x: Math.round((i + 1) * 66.85) + 292.5,
  big: i % 4 === 3
}));

const Drawing = () => (
  <svg width="100%" height="100%" fill="none" shapeRendering="crispEdges">
    <rect x="730" y="140" width="453" height="117" fill="#001a33" />
    <path d="M282.500 139v124.500H1200" stroke="#777" />
    <path d="M290.500 142v87.500H1200" stroke="#777" strokeDasharray="5 3" />
    <g fontFamily="Roboto, sans-serif" fontWeight="100" fontStyle="italic" fontSize="72" fill="#fff">
      <text x="289" y="215">ø</text>
      <text x="331" y="215">55</text>
      <text x="609" y="215">ø</text>
      <text x="651" y="215">55</text>
      <g fontSize="50">
        <text x="410" y="175">+0.021</text>
        <text x="410" y="226">+0.002</text>
      </g>
      <g fill="#9db4cd">
        <text x="735" y="215">+0.021</text>
        <text x="976" y="215">+0.002</text>
        <text x="951" y="162" fontSize="28" fontFamily="DejaVu Sans, sans-serif" fontWeight="200" fontStyle="normal">^</text>
      </g>
    </g>

    <rect x="752" y="230" width="15" height="23" fill="#6f87a2" />
    <path d="M755.500 239.500h8l-4-8zM755.500 243.500h8l-4 8z" stroke="#001a33" />

    <rect x="261" y="110" width="982" height="29" fill="#d2d2d2" />
    <rect x="265.500" y="114.500" width="20" height="20" fill="#fff" stroke="#000" />
    <path d="M275 121v6h5" stroke="#000" strokeWidth="2" />
    <rect x="292.500" y="114.500" width="934" height="20" fill="#fff" stroke="#000" />
    {ticks.map(t => (
      <path key={t.x} d={t.big ? `M${t.x} 119v11` : `M${t.x} 121v6`} stroke="#000" />
    ))}
    <path d="M289.500 112.500h6l-2 6v12l2 6h-6l2-6v-12z" fill="#aaa" stroke="#000" />

    <g stroke="#fff">
      <rect x="11.500" y="562.500" width="11" height="12" />
      <path d="M16.500 562V512M23 568.500h50" />
      <path d="M11 512.500h11l-5.500-13zM16.500 512v-12" />
      <path d="M73.500 563v11l14-5.500zM73 568.500h13" />
    </g>
    <g fontFamily="Roboto, sans-serif" fontWeight="300" fontSize="21" fill="#fff">
      <text x="12" y="490">Y</text>
      <text x="97" y="576">X</text>
    </g>
  </svg>
);

const navIcons = [
  ["第一个", "M1.500 1v8M8 1v8L3 5z"],
  ["上一个", "M7 1v8L2 5z"],
  ["下一个", "M2 1v8l5-4z"],
  ["最后一个", "M7.500 1v8M1 1v8l5-4z"]
];

const Work = () => (
  <Workspace>
    <ToolStrip tools={drawTools} />
    <DrawingFrame>
      <Canvas><Drawing /></Canvas>
      <LayoutTabs>
        {navIcons.map(([label, d]) => (
          <NavButton key={label} aria-label={label}>
            <svg width="9" height="10" fill="#666" stroke="#666"><path d={d} /></svg>
          </NavButton>
        ))}
        <LayoutTab $active>模型</LayoutTab>
        <LayoutTab>布局1</LayoutTab>
        <LayoutTab>布局2</LayoutTab>
      </LayoutTabs>
    </DrawingFrame>
    <ToolStrip tools={snapTools} />
  </Workspace>
);

const Chevron = ({ d }) => (
  <svg width="9" height="9" fill="none" stroke="#555" strokeWidth="2"><path d={d} /></svg>
);

const Command = () => (
  <CommandWindow>
    <CommandGrip />
    <History>
      <div><Cjk>命令</Cjk>:</div>
      <div><Cjk>命令</Cjk>:</div>
    </History>
    <ScrollBar $vertical>
      <button aria-label="向上滚动"><Chevron d="M1 7l3.500-4L8 7" /></button>
      <button aria-label="向下滚动"><Chevron d="M1 2l3.500 4L8 2" /></button>
    </ScrollBar>
    <Prompt>
      <label htmlFor="command"><Cjk>命令</Cjk>:&nbsp;</label>
      <CommandInput id="command" defaultValue="_mtedit" />
      <ScrollBar>
        <button aria-label="向左滚动"><Chevron d="M7 1L3 4.500 7 8" /></button>
        <Thumb />
        <button aria-label="向右滚动"><Chevron d="M2 1l4 3.500L2 8" /></button>
      </ScrollBar>
      <StatusGap $w={16} />
    </Prompt>
  </CommandWindow>
);

const statusTools = [
  ["捕捉", false, <><path d="M2 3.500h9M2 6.500h9M2 9.500h9M2 12.500h9" strokeDasharray="1 2" /><path d="M14.500 2v8M14.500 12v2" stroke="#111" /></>],
  ["栅格", false, <path d="M1.500 1v14M4.500 1v14M7.500 1v14M10.500 1v14M13.500 1v14M1 1.500h14M1 4.500h14M1 7.500h14M1 10.500h14M1 13.500h14" stroke="#222" />],
  ["正交", false, <path d="M1.500 0v14.500H16M2 8.500h5v6" stroke="#444" />],
  ["极轴", true, <path d="M9 4a5 5 0 103 6M5 10L13 2v7H6" stroke="#222" strokeWidth="1.200" />],
  ["对象捕捉", true, <><rect x="3.500" y="3.500" width="12" height="12" fill="#fff" stroke="#444" /><circle cx="2.500" cy="2.500" r="1.500" stroke="#d2612a" /></>],
  ["对象追踪", true, <path d="M13 2L4 11.500h10" stroke="#222" />],
  ["动态坐标", true, <><path d="M2.500 1v13.500H15M3 14l9-9M1 3l1.500-2L4 3" stroke="#222" /><path d="M14 1L9 6h3l-2 4 6-5h-3z" fill="#f6b52a" stroke="#c77a10" /></>],
  ["动态输入", true, <><path d="M1 7.500h9M5.500 3v9" stroke="#111" strokeWidth="1.500" /><path d="M8.500 9.500h6v3h-6z" fill="#fff" stroke="#222" /></>],
  ["线宽", true, <><path d="M1 8h7" stroke="#111" /><path d="M8 8h7M8 3v11" stroke="#111" strokeWidth="2" /></>],
  ["快捷特性", false, <><rect x="4.500" y="3.500" width="7" height="9" fill="#fff" stroke="#111" /><path d="M6 5.500h1M8 5.500h2M6 8h1M8 8h2M6 10.500h1M8 10.500h2" stroke="#111" /></>]
];

const Status = () => (
  <StatusBar>
    <Coordinates>-206.9233, 648.7757, 0.0000</Coordinates>
    {statusTools.map(([label, active, icon]) => (
      <StatusButton key={label} $active={active} aria-label={label}><Svg>{icon}</Svg></StatusButton>
    ))}
    <StatusRight>
      <StatusButton aria-label="模型空间">
        <Svg><rect x="2.500" y="2.500" width="11" height="9" fill="#fff" /><path d="M5.500 4v5h5z" /><path d="M0 14h16" strokeWidth="2" /></Svg>
      </StatusButton>
      <StatusButton aria-label="快速查看布局">
        <Svg><rect x=".500" y="2.500" width="7" height="6" fill="#fff" /><rect x="8.500" y="2.500" width="7" height="6" fill="#fff" /><path d="M1 12.500h14" strokeWidth="2" /></Svg>
      </StatusButton>
      <StatusGap $w={18} />
      <StatusButton aria-label="平移">
        <Svg w={18} h={18}>
          <path d="M2 8l3-2 6 1 2 3v4l-3 3H6l-2-3 3-1-4-1-1-2 4 1z" fill="#e4e7ea" stroke="#444" />
          <path d="M14.500 1v8M10.500 5h8" stroke="#111" strokeWidth="1.500" />
        </Svg>
      </StatusButton>
      <StatusGap $w={205} />
      <WorkspaceSelect>
        <ComboSelect aria-label="工作空间"><option>初始设置工作空间</option></ComboSelect>
        <Down />
      </WorkspaceSelect>
      <StatusButton aria-label="锁定">
        <Svg><path d="M8.500 7V4c0-3 5-3 5 0v3" stroke="#222" strokeWidth="1.500" /><rect x="1.500" y="7.500" width="9" height="7" fill="#eee" stroke="#222" /><path d="M6 9v4" stroke="#222" strokeWidth="2" /></Svg>
      </StatusButton>
      <StatusButton $w={14} aria-label="状态栏菜单"><Down w={6} /></StatusButton>
      <StatusButton $w={23} aria-label="全屏显示">
        <Svg><rect x="1.500" y="1.500" width="13" height="13" fill="#fff" /><path d="M1 3h14" strokeWidth="2" /></Svg>
      </StatusButton>
    </StatusRight>
  </StatusBar>
);

const Popup = () => (
  <ContextMenu role="menu">
    {contextItems.map((item, i) =>
      item ? (
        <MenuItem key={i} role="menuitem" $hot={item.hot} disabled={item.disabled}>
          {item.label}
          {item.keys && <Shortcut>{item.keys}</Shortcut>}
          {item.sub && <ItemArrow><Right /></ItemArrow>}
        </MenuItem>
      ) : (
        <MenuRule key={i} />
      )
    )}
  </ContextMenu>
);

const RedNotes = () => (
  <Notes width="100%" height="100%" fill="none" stroke="#c4303a">
    <rect x="745.500" y="294.500" width="539" height="146" />
    <rect x="1200.500" y="747.500" width="258" height="35" />
    <ellipse cx="994" cy="312.500" rx="28" ry="20" />
    <path d="M933 247l40 52M820 439l-64 60" />
    <g fill="#de2229" stroke="none" fontFamily="Liberation Mono, Noto Sans CJK SC, monospace" fontSize="22">
      <text x="889" y="243">Shift+6</text>
      <text x="780" y="276">1.<tspan x="806" fontSize="24">输入</tspan></text>
      <text x="695" y="520">2.<tspan x="721" fontSize="24">全选</tspan></text>
      <text x="1169" y="753">3.</text>
    </g>
  </Notes>
);

export default () => (
  <Page>
    <GlobalStyle />
    <Top />
    <Ribbon />
    <Work />
    <Command />
    <Status />
    <Popup />
    <RedNotes />
  </Page>
);
